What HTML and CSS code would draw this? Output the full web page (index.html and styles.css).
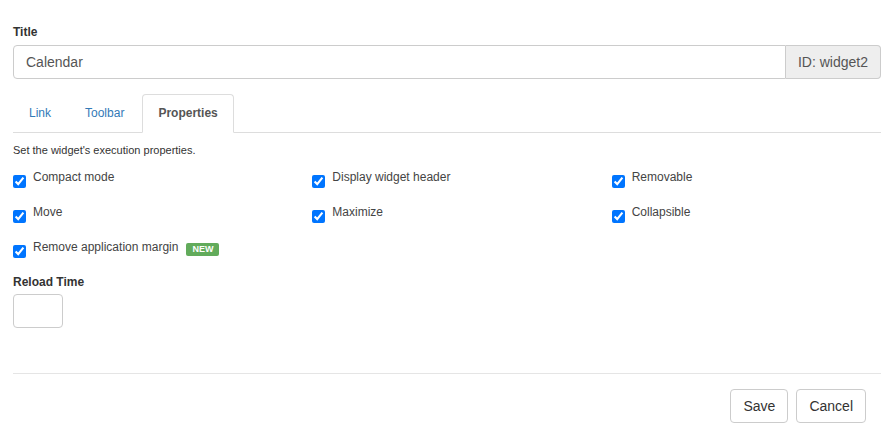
FILE: index.html
```html
<!DOCTYPE html>
<html lang="en">
<head>
  <meta charset="UTF-8" />
  <meta name="viewport" content="width=device-width, initial-scale=1.0"/>
  <title>Widget settings</title>
  <link rel="stylesheet" href="styles.css">
</head>
<body>
  <div class="dialog">
    <label class="field-label" for="title">Title</label>
    <div class="input-group">
      <input type="text" id="title" class="form-control" value="Calendar">
      <span class="addon">ID: widget2</span>
    </div>

    <ul class="nav-tabs">
      <li><a href="#">Link</a></li>
      <li><a href="#">Toolbar</a></li>
      <li class="active"><a href="#">Properties</a></li>
    </ul>

    <p class="help">Set the widget's execution properties.</p>

    <div class="options">
      <label class="check"><input type="checkbox" checked><span>Compact mode</span></label>
      <label class="check"><input type="checkbox" checked><span>Display widget header</span></label>
      <label class="check"><input type="checkbox" checked><span>Removable</span></label>
      <label class="check"><input type="checkbox" checked><span>Move</span></label>
      <label class="check"><input type="checkbox" checked><span>Maximize</span></label>
      <label class="check"><input type="checkbox" checked><span>Collapsible</span></label>
      <label class="check"><input type="checkbox" checked><span>Remove application margin</span><span class="badge">NEW</span></label>
    </div>

    <label class="field-label reload-label" for="reload">Reload Time</label>
    <input type="text" id="reload" class="form-control small">

    <div class="footer">
      <button type="button" class="btn">Save</button>
      <button type="button" class="btn">Cancel</button>
    </div>
  </div>
</body>
</html>
```

FILE: styles.css
```css
body {
  margin: 0;
  font-family: "Liberation Sans", Arial, sans-serif;
  color: #333;
  background: #fff;
}

.dialog {
  padding: 24px 9px 0 13px;
}

.field-label {
  display: block;
  font-size: 12px;
  font-weight: bold;
  line-height: 17px;
  margin-bottom: 4px;
}

.input-group {
  display: flex;
}

.form-control {
  box-sizing: border-box;
  height: 34px;
  padding: 6px 12px;
  font-family: inherit;
  font-size: 14px;
  color: #555;
  border: 1px solid #ccc;
  border-radius: 4px;
  outline: none;
}

.input-group .form-control {
  flex: 1;
  border-radius: 4px 0 0 4px;
}

.addon {
  display: flex;
  align-items: center;
  padding: 0 12px;
  font-size: 14px;
  color: #555;
  background: #eee;
  border: 1px solid #ccc;
  border-left: none;
  border-radius: 0 4px 4px 0;
}

.nav-tabs {
  display: flex;
  list-style: none;
  margin: 15px 0 0;
  padding: 0;
  border-bottom: 1px solid #ddd;
}

.nav-tabs li {
  margin-right: 2px;
  margin-bottom: -1px;
}

.nav-tabs a {
  display: block;
  padding: 10px 15px;
  font-size: 12px;
  line-height: 17px;
  color: #337ab7;
  text-decoration: none;
  border: 1px solid transparent;
  border-radius: 4px 4px 0 0;
}

.nav-tabs .active a {
  color: #555;
  font-weight: bold;
  background: #fff;
  border-color: #ddd #ddd transparent;
}

.help {
  margin: 9px 0 11px;
  font-size: 11px;
  line-height: 16px;
}

.options {
  display: grid;
  grid-template-columns: repeat(3, 1fr);
  row-gap: 16px;
  margin: 0 -15px;
}

.check {
  display: flex;
  align-items: flex-start;
  padding: 0 15px;
  font-size: 12px;
  line-height: 17px;
  color: #444;
}

.check input {
  width: 13px;
  height: 13px;
  margin: 6px 7px 0 0;
}

.badge {
  margin: 4px 0 0 8px;
  padding: 0 6px;
  font-size: 9px;
  font-weight: bold;
  line-height: 13px;
  color: #fff;
  background: #62ab5b;
  border-radius: 2px;
}

.reload-label {
  margin-top: 16px;
  margin-bottom: 3px;
}

.form-control.small {
  display: block;
  width: 50px;
}

.footer {
  display: flex;
  justify-content: flex-end;
  gap: 8px;
  margin-top: 45px;
  padding: 15px 15px 0 0;
  border-top: 1px solid #e5e5e5;
}

.btn {
  height: 34px;
  padding: 6px 12px;
  font-family: inherit;
  font-size: 14px;
  color: #333;
  background: #fff;
  border: 1px solid #ccc;
  border-radius: 4px;
}
```
